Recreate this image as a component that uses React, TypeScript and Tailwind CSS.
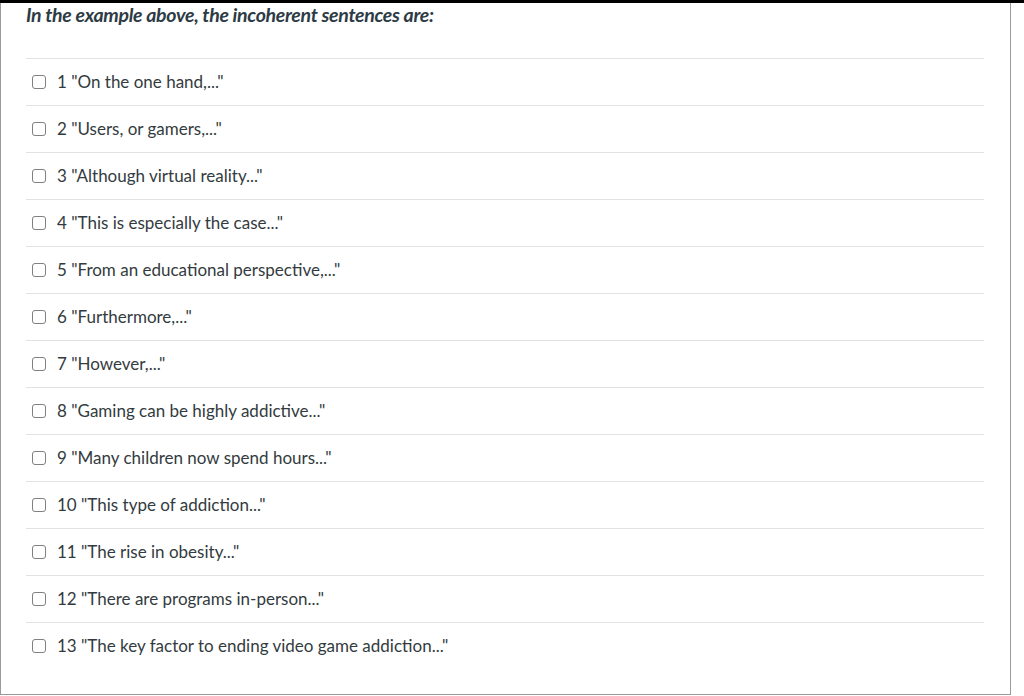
import React from 'react';

const items = [
  '1 "On the one hand,..."',
  '2 "Users, or gamers,..."',
  '3 "Although virtual reality..."',
  '4 "This is especially the case..."',
  '5 "From an educational perspective,..."',
  '6 "Furthermore,..."',
  '7 "However,..."',
  '8 "Gaming can be highly addictive..."',
  '9 "Many children now spend hours..."',
  '10 "This type of addiction..."',
  '11 "The rise in obesity..."',
  '12 "There are programs in-person..."',
  '13 "The key factor to ending video game addiction..."',
];

const App = () => {
  return (
    <div className="w-[1024px] h-[696px] bg-white overflow-hidden" style={{ fontFamily: 'Lato, "Open Sans", sans-serif' }}>
      <div className="h-[3px] bg-black" />
      <div className="w-[1011px] h-[692px] border-l border-r border-b border-[#9a9a9a]">
        <h2 className="pl-[25px] text-[19.5px] leading-[24px] font-bold italic text-[#2d3b45] tracking-[-0.3px]">
          In the example above, the incoherent sentences are:
        </h2>
        <div className="ml-[25px] w-[958px] mt-[31px]">
          {items.map((item) => (
            <label key={item} className="flex items-center h-[47px] border-t border-[#e2e2e2]">
              <span className="ml-[6px] w-[14px] h-[14px] rounded-[3px] border-[1.5px] border-[#808080] bg-white" />
              <span className="ml-[11px] text-[17px] leading-[22px] text-[#333b40] -mt-[1px]">{item}</span>
            </label>
          ))}
        </div>
      </div>
    </div>
  );
};

export default App;
